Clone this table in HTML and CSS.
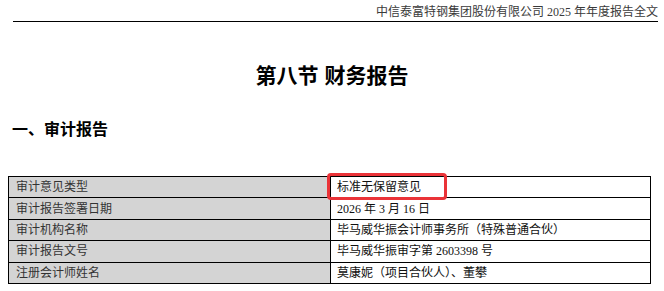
FILE: index.html
```html
<!DOCTYPE html>
<html lang="zh-CN">
<head>
<meta charset="utf-8">
<title>第八节 财务报告</title>
<link rel="stylesheet" href="styles.css">
</head>
<body>
<header class="running-head">中信泰富特钢集团股份有限公司 2025 年年度报告全文</header>
<h1 class="chapter-title">第八节 财务报告</h1>
<h2 class="section-title">一、审计报告</h2>
<div class="audit-table">
  <div class="cell label">审计意见类型</div>
  <div class="cell value highlighted">标准无保留意见<span class="mark"></span></div>
  <div class="cell label">审计报告签署日期</div>
  <div class="cell value">2026 年 3 月 16 日</div>
  <div class="cell label">审计机构名称</div>
  <div class="cell value">毕马威华振会计师事务所（特殊普通合伙）</div>
  <div class="cell label">审计报告文号</div>
  <div class="cell value">毕马威华振审字第 2603398 号</div>
  <div class="cell label">注册会计师姓名</div>
  <div class="cell value">莫康妮（项目合伙人）、董攀</div>
</div>
</body>
</html>
```

FILE: styles.css
```css
html, body {
  margin: 0;
  padding: 0;
  background: #fff;
}
body {
  font-family: "Liberation Serif", "Noto Sans CJK SC", serif;
  color: #111;
}
.running-head {
  margin: 0 6px 0 13px;
  padding: 5px 0 2px;
  font-size: 12px;
  line-height: 14px;
  text-align: right;
  color: #3a3a3a;
  border-bottom: 1.5px solid #000;
}
.chapter-title {
  margin: 41px 0 0;
  font-family: "Liberation Sans", "Noto Sans CJK SC", sans-serif;
  font-size: 21px;
  line-height: 25px;
  font-weight: 700;
  text-align: center;
  color: #000;
}
.section-title {
  margin: 32px 0 0 12px;
  font-family: "Liberation Sans", "Noto Sans CJK SC", sans-serif;
  font-size: 16px;
  line-height: 20px;
  font-weight: 700;
  color: #000;
}
.audit-table {
  margin: 36px 0 0 8px;
  width: 643px;
  box-sizing: border-box;
  display: grid;
  grid-template-columns: 321px 319px;
  grid-auto-rows: 20.4px;
  gap: 1px;
  padding: 1px;
  background: #000;
}
.cell {
  display: flex;
  align-items: center;
  font-size: 12px;
  line-height: 14px;
  white-space: nowrap;
}
.label {
  background: #d4d4d4;
  color: #333;
  padding-left: 7px;
}
.value {
  background: #fff;
  color: #111;
  padding-left: 6px;
}
.highlighted {
  position: relative;
}
.mark {
  position: absolute;
  left: -4px;
  top: -4px;
  width: 120px;
  height: 27px;
  box-sizing: border-box;
  border: 3px solid #ea3338;
  border-radius: 4px;
}
```
